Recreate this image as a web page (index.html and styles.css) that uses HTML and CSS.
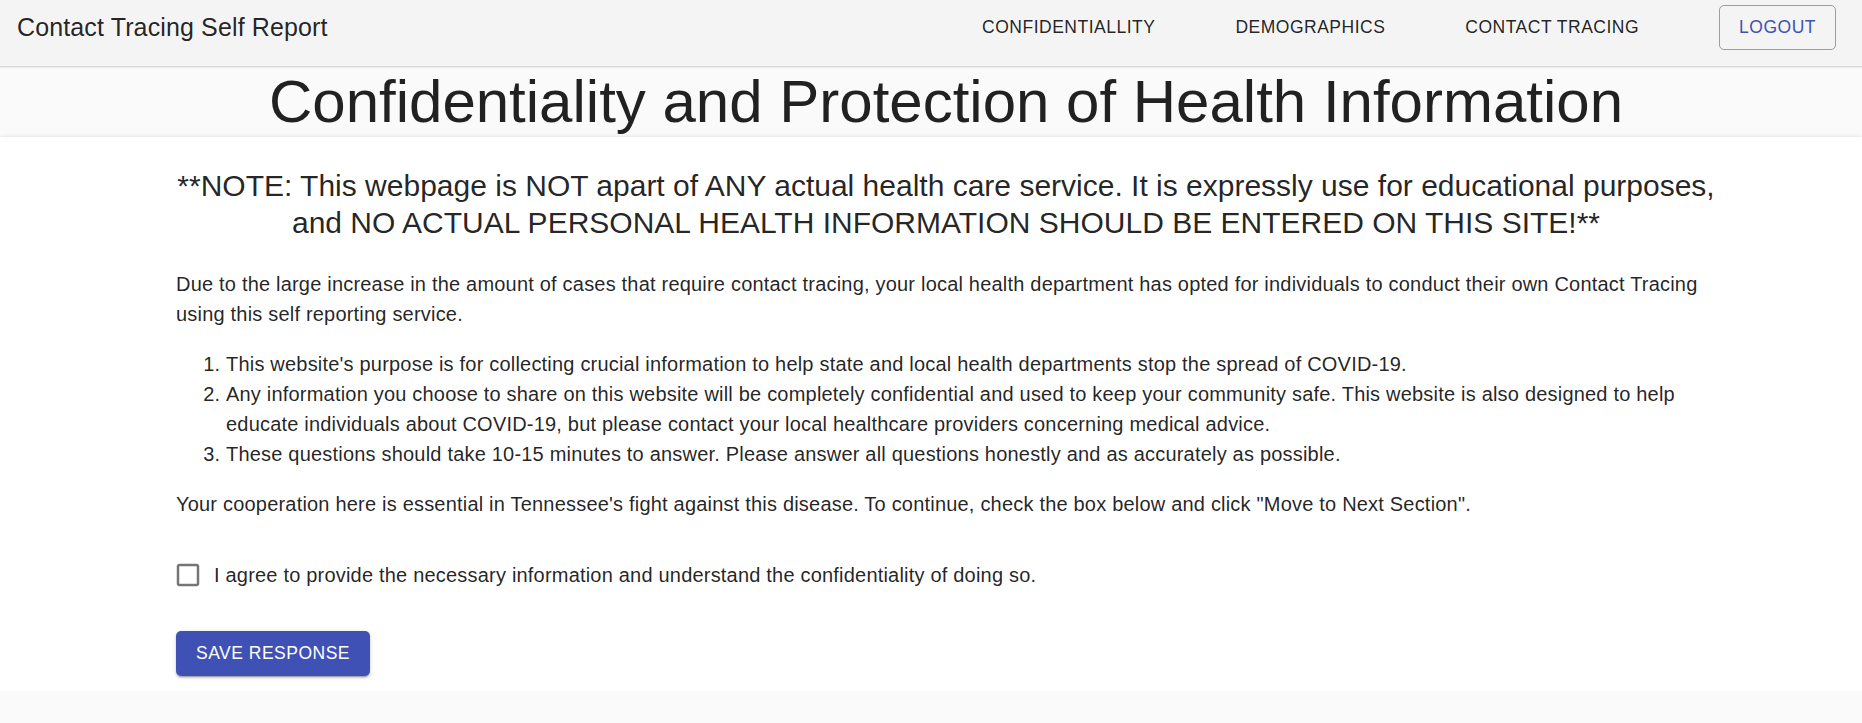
FILE: index.html
```html
<!DOCTYPE html>
<html lang="en">
<head>
<meta charset="utf-8">
<title>Contact Tracing Self Report</title>
<link rel="stylesheet" href="styles.css">
</head>
<body>
<header class="appbar">
  <div class="brand">Contact Tracing Self Report</div>
  <nav class="nav">
    <a class="nav-btn">Confidentiallity</a>
    <a class="nav-btn">Demographics</a>
    <a class="nav-btn">Contact Tracing</a>
    <a class="nav-btn outlined">Logout</a>
  </nav>
</header>
<main>
  <div class="title-wrap">
    <h1 class="page-title">Confidentiality and Protection of Health Information</h1>
  </div>
  <section class="paper">
    <h2 class="note">**NOTE: This webpage is NOT apart of ANY actual health care service. It is expressly use for educational purposes, and NO ACTUAL PERSONAL HEALTH INFORMATION SHOULD BE ENTERED ON THIS SITE!**</h2>
    <p class="body">Due to the large increase in the amount of cases that require contact tracing, your local health department has opted for individuals to conduct their own Contact Tracing using this self reporting service.</p>
    <ol class="list">
      <li>This website's purpose is for collecting crucial information to help state and local health departments stop the spread of COVID-19.</li>
      <li>Any information you choose to share on this website will be completely confidential and used to keep your community safe. This website is also designed to help educate individuals about COVID-19, but please contact your local healthcare providers concerning medical advice.</li>
      <li>These questions should take 10-15 minutes to answer. Please answer all questions honestly and as accurately as possible.</li>
    </ol>
    <p class="body">Your cooperation here is essential in Tennessee's fight against this disease. To continue, check the box below and click "Move to Next Section".</p>
    <label class="check-row">
      <span class="check">
        <svg viewBox="0 0 24 24" width="30" height="30"><path fill="currentColor" d="M19 5v14H5V5h14m0-2H5c-1.11 0-2 .9-2 2v14c0 1.1.89 2 2 2h14c1.1 0 2-.9 2-2V5c0-1.1-.9-2-2-2z"/></svg>
      </span>
      <span class="check-label">I agree to provide the necessary information and understand the confidentiality of doing so.</span>
    </label>
    <div class="actions">
      <button class="save-btn" type="button">Save Response</button>
    </div>
  </section>
</main>
</body>
</html>
```
FILE: styles.css
```css
* { box-sizing: border-box; }

html, body {
  margin: 0;
  padding: 0;
}

body {
  background: #fafafa;
  color: rgba(0, 0, 0, 0.87);
  font-family: "Liberation Sans", Arial, sans-serif;
}

.appbar {
  display: flex;
  align-items: flex-start;
  justify-content: space-between;
  height: 67px;
  padding: 5px 26px 0 17px;
  background: #f4f4f4;
  border-bottom: 1px solid #dadada;
  box-shadow: 0 1px 1px rgba(0, 0, 0, 0.06);
  position: relative;
  z-index: 1;
}

.brand {
  font-size: 25px;
  line-height: 45px;
  letter-spacing: 0.13px;
  color: rgba(0, 0, 0, 0.87);
}

.nav {
  display: flex;
  align-items: center;
  gap: 60px;
}

.nav-btn {
  display: inline-flex;
  align-items: center;
  height: 45px;
  padding: 0 10px;
  font-size: 17.5px;
  letter-spacing: 0.5px;
  text-transform: uppercase;
  color: rgba(0, 0, 0, 0.87);
  cursor: pointer;
}

.nav-btn.outlined {
  margin-left: 10px;
  padding: 0 19px;
  border: 1px solid rgba(63, 81, 181, 0.55);
  border-radius: 5px;
  color: #3f51b5;
}

.title-wrap {
  padding: 0 146px 0 176px;
}

.page-title {
  margin: 0;
  font-size: 60px;
  font-weight: 400;
  line-height: 70px;
  text-align: center;
  color: rgba(0, 0, 0, 0.87);
}

.paper {
  background: #fff;
  padding: 30px 146px 15px 176px;
  box-shadow: 0 1px 0 0 rgba(0, 0, 0, 0.18), 0 2px 3px 0 rgba(0, 0, 0, 0.3), 0 4px 7px 0 rgba(0, 0, 0, 0.08), 0 -1px 5px 0 rgba(0, 0, 0, 0.06);
}

.note {
  margin: 0 0 28px;
  font-size: 30px;
  font-weight: 400;
  line-height: 37px;
  text-align: center;
}

.body {
  margin: 0 0 20px;
  font-size: 20px;
  line-height: 30px;
  letter-spacing: 0.2px;
}

.list {
  margin: 0 0 20px;
  padding-left: 50px;
  font-size: 20px;
  line-height: 30px;
  letter-spacing: 0.2px;
}

.check-row {
  display: flex;
  align-items: center;
  margin: 30px 0 30px -14px;
  cursor: pointer;
}

.check {
  display: inline-flex;
  padding: 11px;
  color: rgba(0, 0, 0, 0.54);
}

.check svg {
  display: block;
}

.check-label {
  font-size: 20px;
  line-height: 30px;
  letter-spacing: 0.2px;
}

.actions {
  display: flex;
}

.save-btn {
  height: 45px;
  padding: 0 20px;
  border: 0;
  border-radius: 5px;
  background: #3f51b5;
  color: #fff;
  font-family: "Liberation Sans", Arial, sans-serif;
  font-size: 17.5px;
  letter-spacing: 0.5px;
  text-transform: uppercase;
  box-shadow: 0 3px 1px -2px rgba(0, 0, 0, 0.2), 0 2px 2px 0 rgba(0, 0, 0, 0.14), 0 1px 5px 0 rgba(0, 0, 0, 0.12);
  cursor: pointer;
}
```
